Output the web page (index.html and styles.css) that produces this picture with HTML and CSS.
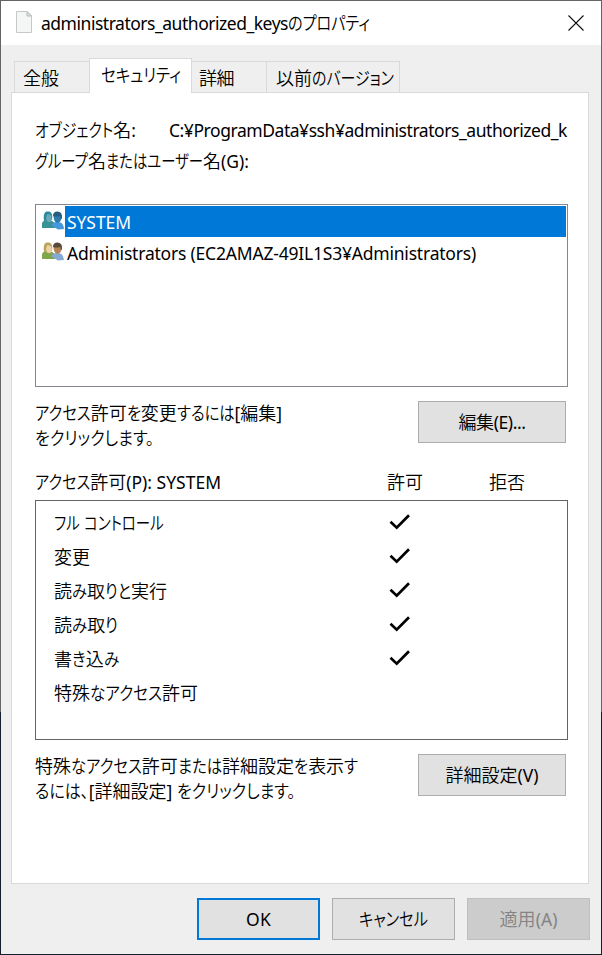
FILE: index.html
```html
<!DOCTYPE html>
<html lang="ja">
<head>
<meta charset="utf-8">
<title>administrators_authorized_keysのプロパティ</title>
<link rel="stylesheet" href="styles.css">
</head>
<body>
<svg class="defs" width="0" height="0">
  <defs>
    <symbol id="check" viewBox="0 0 22 18"><path d="M1.500 8.800 L7.700 14.700 L20 2.200" fill="none" stroke="#000" stroke-width="2.700"/></symbol>
    <symbol id="people" viewBox="0 0 22 20">
      <path class="coat-a" d="M0 17v-4q0-3 3-3.500l3-.8 4 1.200 3 2v5z"/>
      <path class="hair-a" d="M2 10C1 2 3 .6 6 .6S11 3 10 9z"/>
      <path class="skin-a" d="M5 3.400q4-.6 4.600 2.600c.4 3-.4 5-2.500 5.300Q4.300 11 4 7z"/>
      <path class="coat-b" d="M9.500 14.500q.5-2.500 3-3l2-.8 4 .8q3 1.200 3.500 6.500l-6 .5z"/>
      <path class="skin-b" d="M11.500 5q.2-3.500 4-3.500t4 4q0 5.500-4 6.500-3.800-1-4-7z"/>
      <path class="hair-b" d="M11 5q0-4.500 4.500-4.500Q20.500.800 20 7l-1 1.500-.7-3.500Q14 6 11 5z"/>
    </symbol>
  </defs>
</svg>
<div class="window">
  <header class="titlebar">
    <svg class="file-icon" width="18" height="24" viewBox="0 0 18 24">
      <path d="M1.500 1.500h10.500l4.500 4.500v16.500h-15z" fill="#f4f5f5" stroke="#c6c8c9"/>
      <path d="M12 1.500v4.500h4.500z" fill="#dfe2e3" stroke="#b5b8ba"/>
    </svg>
    <h1 class="title"><span data-width="247">administrators_authorized_keys</span><span data-width="82">のプロパティ</span></h1>
    <svg class="close" width="16" height="16" viewBox="0 0 16 16"><path d="M.5.5l15 15M15.500.5l-15 15" stroke="#111" stroke-width="1.100"/></svg>
  </header>

  <nav class="tabs">
    <div class="tab general"><span data-width="36">全般</span></div>
    <div class="tab security active"><span data-width="80">セキュリティ</span></div>
    <div class="tab details"><span data-width="35">詳細</span></div>
    <div class="tab versions"><span data-width="118">以前のバージョン</span></div>
  </nav>

  <main class="panel">
    <div class="object-row">
      <span class="object-label"><span data-width="101">オブジェクト名:</span></span>
      <span data-width="398">C:¥ProgramData¥ssh¥administrators_authorized_k</span>
    </div>
    <div class="group-label"><span data-width="214">グループ名またはユーザー名(G):</span></div>

    <div class="principals">
      <div class="principal selected">
        <svg class="people" width="22" height="20"><use href="#people"/></svg>
        <div class="name"><span data-width="64">SYSTEM</span></div>
      </div>
      <div class="principal">
        <svg class="people" width="22" height="20"><use href="#people"/></svg>
        <div class="name"><span data-width="409">Administrators (EC2AMAZ-49IL1S3¥Administrators)</span></div>
      </div>
    </div>

    <section class="hint edit-hint">
      <p><span data-width="247">アクセス許可を変更するには[編集]</span><br><span data-width="119">をクリックします。</span></p>
      <button class="button wide"><span data-width="67">編集(E)...</span></button>
    </section>

    <div class="permissions-head">
      <div><span data-width="186">アクセス許可(P): SYSTEM</span></div>
      <div><span data-width="36">許可</span></div>
      <div><span data-width="36">拒否</span></div>
    </div>
    <div class="permissions">
      <div class="permission"><div><span data-width="110">フル コントロール</span></div><svg width="22" height="18"><use href="#check"/></svg></div>
      <div class="permission"><div><span data-width="36">変更</span></div><svg width="22" height="18"><use href="#check"/></svg></div>
      <div class="permission"><div><span data-width="113">読み取りと実行</span></div><svg width="22" height="18"><use href="#check"/></svg></div>
      <div class="permission"><div><span data-width="64">読み取り</span></div><svg width="22" height="18"><use href="#check"/></svg></div>
      <div class="permission"><div><span data-width="65">書き込み</span></div><svg width="22" height="18"><use href="#check"/></svg></div>
      <div class="permission"><div><span data-width="144">特殊なアクセス許可</span></div></div>
    </div>

    <section class="hint advanced-hint">
      <p><span data-width="323">特殊なアクセス許可または詳細設定を表示す</span><br><span data-width="260">るには、[詳細設定] をクリックします。</span></p>
      <button class="button wide"><span data-width="93">詳細設定(V)</span></button>
    </section>
  </main>

  <footer class="actions">
    <button class="button default"><span data-width="25">OK</span></button>
    <button class="button"><span data-width="69">キャンセル</span></button>
    <button class="button" disabled><span data-width="58">適用(A)</span></button>
  </footer>
</div>
<script src="fit.js"></script>
</body>
</html>
```

FILE: styles.css
```css
* { box-sizing: border-box; }

body {
  margin: 0;
  font: 300 18px/24px "Noto Sans", "Noto Sans CJK JP", sans-serif;
  color: #000;
}

.defs { display: block; }

span[data-width] {
  display: inline-block;
  white-space: pre;
  font-size: 18px;
  font-weight: 350;
  line-height: 24px;
  vertical-align: top;
}

.latin { font-size: 17.5px; font-weight: 400; }

.kana {
  display: inline-block;
  font-family: "Noto Sans CJK JP", sans-serif;
  font-feature-settings: "palt";
  font-size: 18px;
  line-height: 20px;
  transform-origin: left;
}

.window {
  display: flex;
  flex-direction: column;
  width: 602px;
  height: 955px;
  border: 1px solid;
  border-image: linear-gradient(#646464 712px, #15202d 712px) 1;
  background: #efefef;
}

.titlebar {
  display: flex;
  align-items: center;
  height: 44px;
  padding: 0 17px 0 14px;
  background: #fff;
}

.file-icon { margin-top: -2px; }
.close { margin-top: -1px; }
.title { flex: 1; margin: 0 0 0 8px; font-size: 18px; font-weight: 300; line-height: 24px; }

.tabs {
  display: flex;
  align-items: flex-end;
  height: 47px;
  padding-left: 13px;
}

.tab {
  height: 32px;
  padding: 4px 0 0 8px;
  border: 1px solid #d9d9d9;
  border-left: 0;
  margin-bottom: -1px;
}

.general { width: 75px; border-left: 1px solid #d9d9d9; border-right: 0; }
.security { width: 103px; padding-left: 11px; }
.details { width: 75px; padding-left: 7px; }
.versions { width: 133px; padding-left: 9px; }

.tab.active {
  position: relative;
  height: 35px;
  border: 1px solid #d9d9d9;
  border-bottom: 0;
  background: #fff;
}

.panel {
  width: 578px;
  height: 792px;
  margin-left: 10px;
  padding: 25px 20px 0 23px;
  border: 1px solid #d9d9d9;
  background: #fff;
}

.object-row { display: flex; height: 31px; }
.object-label { width: 134px; }
.group-label { height: 55px; }

.principals {
  height: 183px;
  padding: 1px;
  border: 1px solid #828790;
}

.principal { display: flex; height: 31px; }
.people { margin: 5px 0 0 5px; }
.name { flex: 1; margin-left: 1px; padding: 4px 0 0 2px; }
.selected .name { background: #0078d7; color: #fff; }

.principals {
  --coat-a: #7fa64b;
  --hair-a: #b9a45e;
  --skin-a: #edd2a8;
  --coat-b: #85aad8;
  --hair-b: #59493a;
  --skin-b: #b58455;
}

.selected {
  --coat-a: #399395;
  --hair-a: #2b8b9c;
  --skin-a: #6ba9b8;
  --coat-b: #4598dc;
  --hair-b: #285b80;
  --skin-b: #2d7cac;
}

.coat-a { fill: var(--coat-a); }
.hair-a { fill: var(--hair-a); }
.skin-a { fill: var(--skin-a); }
.coat-b { fill: var(--coat-b); }
.hair-b { fill: var(--hair-b); }
.skin-b { fill: var(--skin-b); }

.hint { display: flex; justify-content: space-between; padding-right: 2px; }
.hint p { margin: 0; line-height: 25px; }
.edit-hint { height: 83px; padding-top: 14px; }
.advanced-hint { padding-top: 14px; }

.button {
  width: 123px;
  height: 42px;
  padding: 0;
  border: 1px solid #adadad;
  background: #e1e1e1;
  color: #000;
  font: inherit;
}

.wide { width: 148px; }
.default { border: 2px solid #0078d7; }
.button:disabled { border-color: #bfbfbf; background: #ccc; color: #838383; }

.permissions-head {
  display: grid;
  grid-template-columns: 352px 102px 1fr;
  height: 30px;
}

.permissions {
  height: 240px;
  padding: 5px 0 0 18px;
  border: 1px solid #646464;
}

.permission {
  display: grid;
  grid-template-columns: 335px 22px;
  align-items: center;
  height: 34px;
}
.permission svg { margin-top: -2px; }

.actions {
  display: flex;
  gap: 12px;
  margin: 14px 0 0 196px;
}
```

FILE: fit.js
```js
// Condenses kana and tracks the remaining labels to their design width.
const script = /([\u3001\u3002\u3040-\u30ff]+)|([\u0020-\u00ff]+)/g;

document.querySelectorAll("[data-width]").forEach((label) => {
  label.innerHTML = label.textContent.replace(script, (run, kana) =>
    `<span class="${kana ? "kana" : "latin"}">${run}</span>`);
  const extra = Number(label.dataset.width) - label.getBoundingClientRect().width;
  const kana = [...label.querySelectorAll(".kana")];
  if (!kana.length) {
    label.style.letterSpacing = `${extra / label.textContent.length}px`;
    return;
  }
  const widths = kana.map((el) => el.getBoundingClientRect().width);
  const total = widths.reduce((sum, w) => sum + w, 0);
  const scale = 1 + extra / total;
  kana.forEach((el, i) => {
    el.style.transform = `scaleX(${scale})`;
    el.style.marginRight = `${widths[i] * (scale - 1)}px`;
  });
});
```
